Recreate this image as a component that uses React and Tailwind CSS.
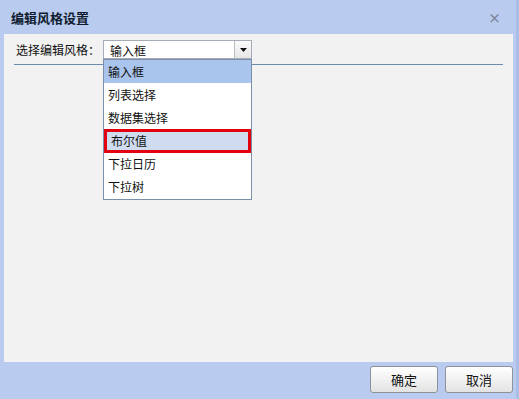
import React from 'react';

const options = ['输入框', '列表选择', '数据集选择', '布尔值', '下拉日历', '下拉树'];

function App() {
  const font = { fontFamily: '"Noto Sans CJK SC", "Liberation Sans", sans-serif' };

  return (
    <div
      className="w-[519px] h-[399px] bg-[#b9cbee] flex flex-col text-[#111] border-r-[3px] border-[#a9bde6]"
      style={font}
    >
      {/* title bar */}
      <div className="h-[34px] flex items-center justify-between pl-[11px] pr-[15px]">
        <span className="text-[13px] font-bold text-[#101c30] leading-none">编辑风格设置</span>
        <span className="text-[13px] font-bold text-[#7d889c] leading-none">×</span>
      </div>

      {/* body */}
      <div className="mx-[4px] mr-[3px] flex-1 bg-[#f2f2f2] flex flex-col">
        <div className="flex items-center pt-[6px] pl-[12px]">
          <span className="w-[87px] text-[12px] leading-none">选择编辑风格：</span>
          <div className="relative w-[149px] h-[19px] bg-white border border-[#a5acb5] flex">
            <span className="flex-1 text-[12px] leading-[19px] pl-[6px]">输入框</span>
            <div className="w-[17px] h-full border-l border-[#b8bec6] bg-gradient-to-b from-[#fbfbfb] to-[#e6e6e6] flex items-center justify-center">
              <svg width="7" height="4" viewBox="0 0 7 4">
                <path d="M0 0 L7 0 L3.5 4 Z" fill="#111" />
              </svg>
            </div>

            {/* dropdown list */}
            <div className="absolute left-[-1px] top-[18px] w-[149px] h-[141px] bg-white border border-[#7b8fa8] flex flex-col z-10">
              {options.map((opt, i) => (
                <div
                  key={opt}
                  className={
                    'h-[23.5px] flex items-center text-[12px] leading-none pl-[4px] ' +
                    (i === 0 ? 'bg-[#a9c5ee] ' : '') +
                    (i === 3 ? 'bg-[#cfdcf0] border-[3px] border-[#e3000f] pl-[1px]' : '')
                  }
                >
                  {opt}
                </div>
              ))}
            </div>
          </div>
        </div>
        <div className="mt-[5px] mx-[10px] h-px bg-[#6d8cad]" />
      </div>

      {/* footer */}
      <div className="h-[37px] flex items-start justify-end gap-[7px] pt-[4px] pr-[3px]">
        <button className="w-[68px] h-[27px] rounded-[3px] border border-[#8e939a] bg-gradient-to-b from-white to-[#e3e3e3] text-[13px]">
          确定
        </button>
        <button className="w-[68px] h-[27px] rounded-[3px] border border-[#8e939a] bg-gradient-to-b from-white to-[#e3e3e3] text-[13px]">
          取消
        </button>
      </div>
    </div>
  );
}

export default App;
